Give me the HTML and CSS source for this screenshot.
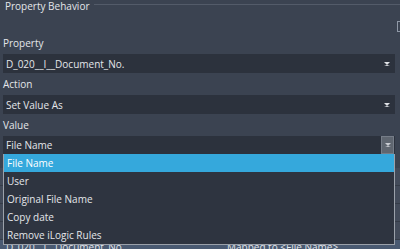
FILE: index.html
```html
<!DOCTYPE html>
<html lang="en">
<head>
  <meta charset="UTF-8">
  <title>Property Behavior</title>
  <link rel="stylesheet" href="styles.css">
</head>
<body>
  <div class="panel">
    <div class="group-title">
      <span>Property Behavior</span>
      <div class="group-line"></div>
    </div>
    <div class="side-btn"></div>

    <label class="field-label first">Property</label>
    <div class="combo">
      <span>D_020__I__Document_No.</span>
      <span class="arrow"></span>
    </div>

    <label class="field-label">Action</label>
    <div class="combo">
      <span>Set Value As</span>
      <span class="arrow"></span>
    </div>

    <label class="field-label">Value</label>
    <div class="value-wrap">
      <div class="combo combo-open">
        <span>File Name</span>
        <span class="arrow-btn"><span class="arrow"></span></span>
      </div>

      <ul class="dropdown">
        <li class="selected">File Name</li>
        <li>User</li>
        <li>Original File Name</li>
        <li>Copy date</li>
        <li>Remove iLogic Rules</li>
      </ul>
    </div>

    <!-- mapping grid, mostly hidden behind the open list -->
    <div class="grid">
      <div class="grid-row"></div>
      <div class="grid-row"></div>
      <div class="grid-row"></div>
      <div class="grid-row"></div>
      <div class="grid-row active">
        <span class="cell-name">D_020__I__Document_No.</span>
        <span class="cell-map">Mapped to &lt;File Name&gt;</span>
      </div>
    </div>
  </div>
</body>
</html>
```

FILE: styles.css
```css
* {
  box-sizing: border-box;
  margin: 0;
  padding: 0;
}

body {
  background: #3b4351;
  font-family: 'Open Sans', sans-serif;
  font-size: 10px;
  color: #e4e6ea;
  overflow: hidden;
  height: 249px;
}

.panel {
  position: relative;
  padding: 0 5px 0 3px;
}

.group-title {
  display: flex;
  align-items: center;
  height: 12px;
  padding-left: 2px;
  gap: 4px;
}

.group-line {
  flex: 1;
  height: 1px;
  background: #535b69;
  margin-right: -5px;
  margin-top: -4px;
}

.side-btn {
  position: absolute;
  right: -4px;
  top: 21px;
  width: 7px;
  height: 11px;
  border: 1px solid #8f98a6;
}

.field-label {
  display: block;
  height: 16px;
  line-height: 16px;
  margin-top: 3px;
}

.field-label.first {
  margin-top: 23px;
}

.combo {
  display: flex;
  align-items: center;
  justify-content: space-between;
  height: 19px;
  margin-top: 3px;
  background: #2c323d;
  padding-left: 3px;
  padding-right: 4px;
}

.arrow {
  width: 0;
  height: 0;
  border-left: 3px solid transparent;
  border-right: 3px solid transparent;
  border-top: 3px solid #dfe2e6;
  border-bottom: 1px solid #dfe2e6;
  margin-right: 1px;
}

.value-wrap {
  position: relative;
  margin-top: 3px;
}

.combo-open {
  height: 18px;
  margin-top: 0;
  padding-right: 1px;
}

.arrow-btn {
  width: 13px;
  height: 18px;
  background: #5f6670;
  border: 1px solid #767d88;
  display: flex;
  align-items: center;
  justify-content: center;
}

.arrow-btn .arrow {
  margin: 0;
  border-top-color: #c9ccd2;
  border-bottom-color: #c9ccd2;
}

.dropdown {
  position: absolute;
  left: 0;
  top: 18px;
  width: 392px;
  list-style: none;
  background: #2e3440;
  border: 1px solid #9ba1aa;
  border-top: none;
  z-index: 2;
}

.dropdown li {
  height: 18px;
  line-height: 18px;
  padding-left: 3px;
}

.dropdown li.selected {
  background: #35a8dc;
  color: #ffffff;
}

.grid {
  margin-top: 14px;
  margin-left: -3px;
  margin-right: -5px;
}

.grid-row {
  display: flex;
  height: 18px;
  line-height: 18px;
  background: #434b5a;
  border-bottom: 1px solid #353c48;
}

.grid-row.active {
  background: #4a5a72;
  line-height: 15px;
}

.cell-name {
  width: 227px;
  padding-left: 6px;
}
```
